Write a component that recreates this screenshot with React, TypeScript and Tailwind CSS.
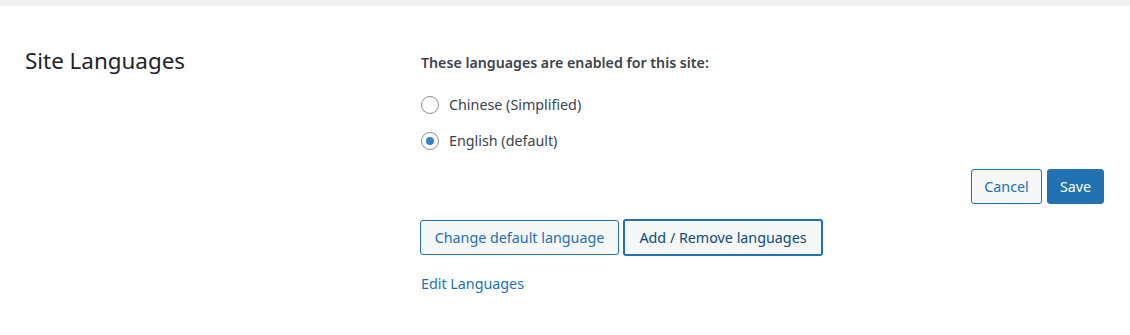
import React from "react";

const font = { fontFamily: '"Noto Sans", "Open Sans", sans-serif' };

function Radio({ checked, label }: { checked?: boolean; label: string }) {
  return (
    <label className="flex items-center h-[36px]">
      <span className="w-[18px] h-[18px] rounded-full border border-[#8c8f94] bg-white flex items-center justify-center">
        {checked && <span className="w-[8px] h-[8px] rounded-full bg-[#3582c4]" />}
      </span>
      <span className="ml-[10px] text-[14.3px] text-[#3c434a]">{label}</span>
    </label>
  );
}

export default function App() {
  return (
    <div className="w-[1130px] h-[335px] bg-white" style={font}>
      <div className="h-[6px] bg-[#f0f0f1]" />
      <div className="flex pl-[25px] pr-[26px] pt-[40px]">
        <div className="w-[396px] shrink-0">
          <h2 className="text-[22.4px] leading-[30px] text-[#1d2327] font-normal">Site Languages</h2>
        </div>
        <div className="flex-1">
          <p className="text-[14.2px] font-semibold text-[#3c434a] leading-[21px] mt-[6px]">
            These languages are enabled for this site:
          </p>
          <div className="mt-[14px] flex flex-col">
            <Radio label="Chinese (Simplified)" />
            <Radio checked label="English (default)" />
          </div>
          <div className="flex justify-end gap-[5px] mt-[10px]">
            <button className="h-[35px] w-[71px] rounded-[3px] border border-[#2271b1] bg-[#f6f7f7] text-[#2271b1] text-[14.3px]">
              Cancel
            </button>
            <button className="h-[35px] w-[57px] rounded-[3px] border border-[#2271b1] bg-[#2271b1] text-white text-[14.3px]">
              Save
            </button>
          </div>
          <div className="flex gap-[4px] mt-[16px] -ml-[1px]">
            <button className="h-[35px] w-[199px] rounded-[3px] border border-[#2271b1] bg-[#f6f7f7] text-[#2271b1] text-[14.3px]">
              Change default language
            </button>
            <button className="h-[37px] w-[200px] -mt-[1px] rounded-[3px] border-2 border-[#2271b1] bg-[#f6f7f7] text-[#0a4b78] text-[14.3px]">
              Add / Remove languages
            </button>
          </div>
          <a className="block mt-[17px] text-[14.3px] text-[#2271b1]">Edit Languages</a>
        </div>
      </div>
    </div>
  );
}
